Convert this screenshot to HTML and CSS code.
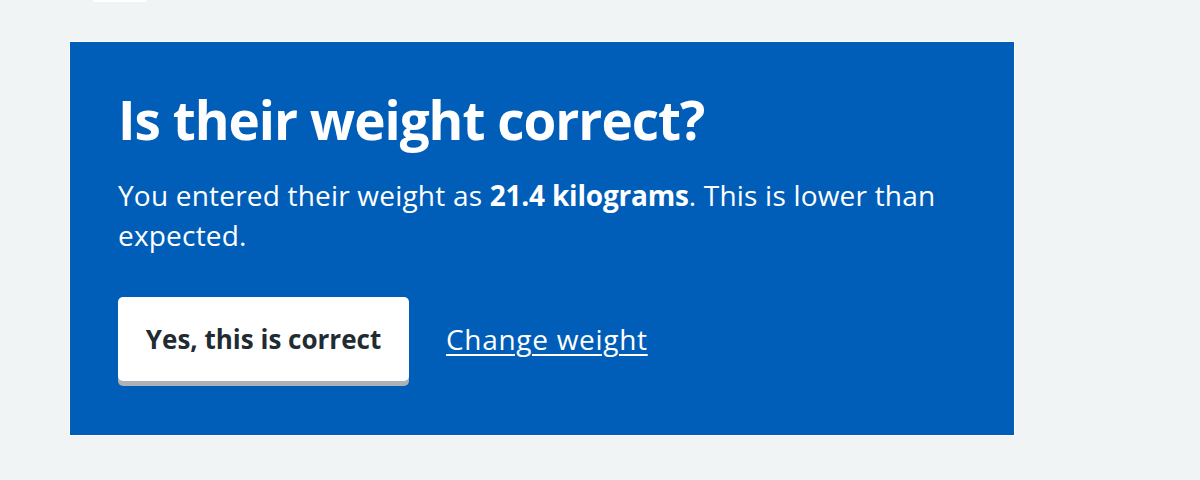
FILE: index.html
```html
<!DOCTYPE html>
<html lang="en">
<head>
<meta charset="utf-8">
<title>Is their weight correct?</title>
<link rel="stylesheet" href="styles.css">
</head>
<body>
<div class="top-strip"></div>
<main class="page">
  <section class="panel">
    <h1 class="panel-title">Is their weight correct?</h1>
    <p class="panel-text">You entered their weight as <strong>21.4 kilograms</strong>. This is lower than expected.</p>
    <div class="actions">
      <button class="btn-reverse" type="button">Yes, this is correct</button>
      <a class="panel-link" href="#">Change weight</a>
    </div>
  </section>
</main>
</body>
</html>
```

FILE: styles.css
```css
html, body {
  margin: 0;
  padding: 0;
}
body {
  background: #f0f4f5;
  font-family: "Open Sans", "Noto Sans", Arial, sans-serif;
  color: #212b32;
  height: 480px;
  overflow: hidden;
}
.top-strip {
  margin-left: 93px;
  width: 53px;
  height: 2px;
  background: #ffffff;
}
.page {
  padding: 40px 0 0 70px;
}
.panel {
  box-sizing: border-box;
  width: 944px;
  height: 393px;
  background: #005eb8;
  color: #ffffff;
  padding: 46px 48px 48px 48px;
  outline: 1px solid rgba(255,255,255,0.7);
}
.panel-title {
  margin: 0 0 23px 0;
  font-size: 53px;
  line-height: 64px;
  font-weight: 700;
  letter-spacing: -1px;
}
.panel-text {
  margin: 0 0 42px 0;
  font-size: 28px;
  line-height: 40px;
  font-weight: 400;
  letter-spacing: 0.2px;
}
.panel-text strong {
  font-weight: 700;
  letter-spacing: -0.2px;
}
.actions {
  display: flex;
  align-items: center;
  gap: 37px;
}
.btn-reverse {
  font-family: inherit;
  font-size: 26px;
  font-weight: 700;
  color: #212b32;
  background: #ffffff;
  border: 0;
  border-radius: 5px;
  height: 84px;
  width: 291px;
  padding: 0;
  box-shadow: 0 5px 0 #aeb2b4;
  margin-bottom: 5px;
}
.panel-link {
  color: #ffffff;
  font-size: 28px;
  letter-spacing: 0.7px;
  text-decoration: underline;
  text-underline-offset: 4px;
  text-decoration-thickness: 2px;
  margin-bottom: 5px;
}
```
